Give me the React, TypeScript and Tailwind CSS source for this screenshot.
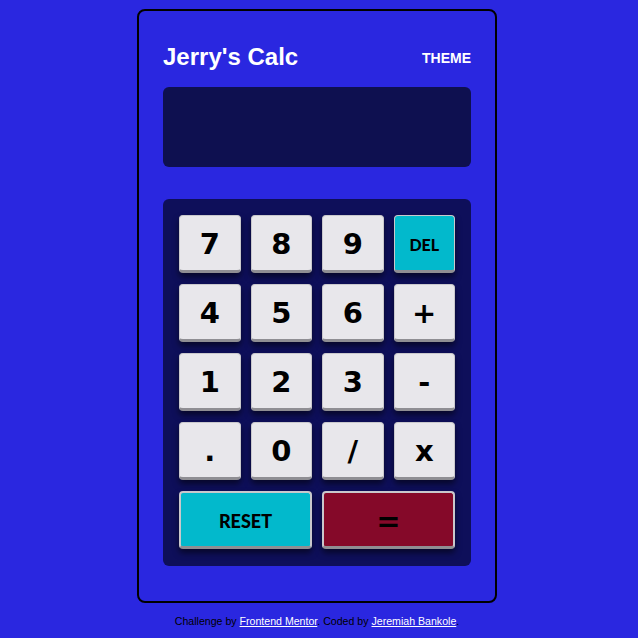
import React from 'react';

const keys = ['7', '8', '9', 'DEL', '4', '5', '6', '+', '1', '2', '3', '-', '.', '0', '/', 'x'];

const Key = ({ label }: { label: string }) => {
  const isDel = label === 'DEL';
  return (
    <button
      className={`h-[58px] rounded-[4px] border border-[#c9c8cc] border-b-[3px] border-b-[#8f8e93] shadow-[0_4px_6px_rgba(0,0,0,0.55)] flex items-center justify-center pt-[4px] text-black ${
        isDel
          ? "bg-[#02b9cc] text-[16px] font-black font-['Lato',sans-serif]"
          : "bg-[#e8e7eb] text-[29px] font-bold font-['DejaVu_Sans',sans-serif]"
      }`}
    >
      {label}
    </button>
  );
};

export default function App() {
  return (
    <div className="w-full min-h-screen bg-[#2a27e0] flex flex-col items-center pt-[9px] pr-[4px] font-['Liberation_Sans',Arial,sans-serif]">
      <div className="w-[360px] h-[594px] border-2 border-black rounded-[8px] px-[24px] pt-[32px]">
        <div className="flex justify-between items-center h-[30px]">
          <h1 className="text-[24px] font-bold text-white -mt-[2px]">Jerry's Calc</h1>
          <span className="text-[14px] font-bold text-white">THEME</span>
        </div>
        <div className="mt-[14px] h-[80px] rounded-[6px] bg-[#0e1050]"></div>
        <div className="mt-[32px] rounded-[6px] bg-[#0e0f5a] p-[16px] pb-[17px]">
          <div className="grid grid-cols-4 gap-x-[10px] gap-y-[11px]">
            {keys.map((k) => (
              <Key key={k} label={k} />
            ))}
            <button className="col-span-2 h-[58px] rounded-[4px] border-2 border-[#c9c8cc] border-b-[3px] border-b-[#8f8e93] shadow-[0_4px_6px_rgba(0,0,0,0.55)] bg-[#02b9cc] pt-[3px] text-black text-[18px] font-black font-['Lato',sans-serif]">
              RESET
            </button>
            <button className="col-span-2 h-[58px] rounded-[4px] border-2 border-[#c9c8cc] border-b-[3px] border-b-[#8f8e93] shadow-[0_4px_6px_rgba(0,0,0,0.55)] bg-[#850929] pt-[4px] text-black text-[29px] font-bold font-['DejaVu_Sans',sans-serif]">
              =
            </button>
          </div>
        </div>
      </div>
      <p className="mt-[11px] text-[10.6px] text-black">
        Challenge by{' '}
        <a href="#" className="text-white underline">Frontend Mentor</a>. Coded by{' '}
        <a href="#" className="text-white underline">Jeremiah Bankole</a>.
      </p>
    </div>
  );
}
